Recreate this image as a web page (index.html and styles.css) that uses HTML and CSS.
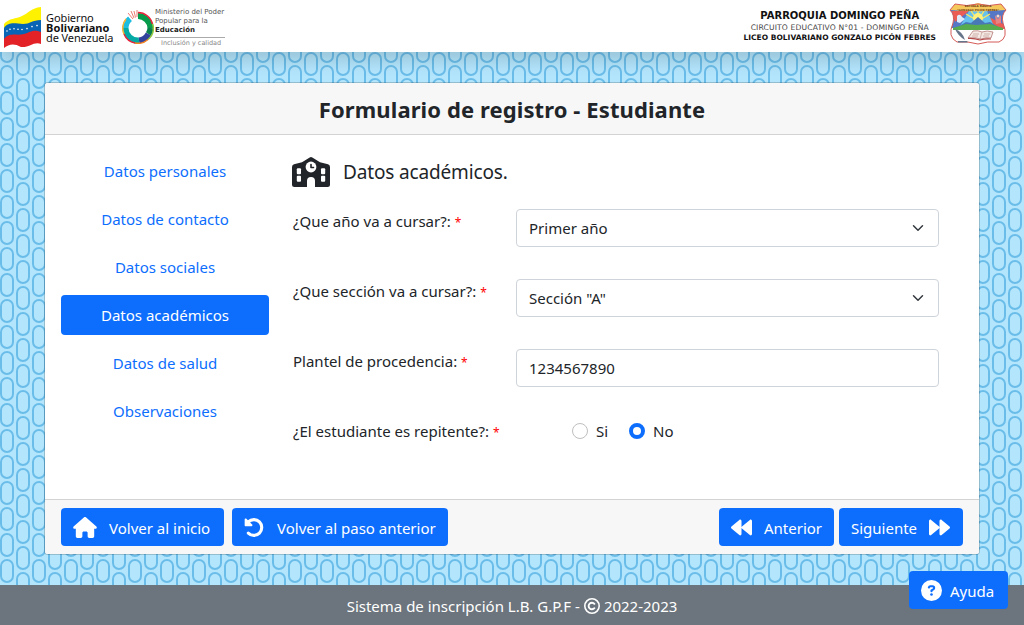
FILE: index.html
```html
<!DOCTYPE html>
<html lang="es">
<head>
<meta charset="utf-8">
<title>Formulario de registro - Estudiante</title>
<link rel="stylesheet" href="styles.css">
</head>
<body>
<header class="topbar">
  <div class="brand">
    <svg class="flag" viewBox="0 0 38 41" width="38" height="41">
      <path fill="#fff200" d="M0 17C5 11 12 12 18 9C25 6 27 1 37 0V15C27 15 22 24 12 22C7 22 4 24 0 27Z"/>
      <path fill="#0864b4" d="M0 21C5 14 12 17 19 17C26 17 28 13 37 13V28C28 25 23 32 14 33C8 29 4 30 0 33Z"/>
      <path fill="#e32227" d="M0 32C6 25 12 29 20 27C27 25 29 22 37 25V37C30 34 25 41 17 40C10 36 5 37 0 41Z"/>
      <g fill="#fff"><circle cx="3" cy="24" r=".8"/><circle cx="6" cy="22.3" r=".8"/><circle cx="10" cy="21.7" r=".8"/><circle cx="14" cy="22.2" r=".8"/><circle cx="18" cy="22.5" r=".8"/><circle cx="23" cy="21.6" r=".8"/><circle cx="28" cy="19.6" r=".8"/><circle cx="33" cy="18.6" r=".8"/></g>
    </svg>
    <div class="gov"><span>Gobierno</span><b>Bolivariano</b><span>de Venezuela</span></div>
    <svg class="ring" viewBox="0 0 32 34" width="32" height="34">
      <g fill="none" stroke-width="6">
        <path stroke="#079b4b" d="M16 6A12.5 12.5 0 0 1 28.5 18"/>
        <path stroke="#087f4d" d="M28.5 18A12.5 12.5 0 0 1 26.5 24"/>
        <path stroke="#30429b" d="M26.5 24A12.5 12.5 0 0 1 17 30.5"/>
        <path stroke="#06aaa4" d="M17 30.5A12.5 12.5 0 0 1 3.500 18"/>
        <path stroke="#1cbde0" d="M3.500 18A12.5 12.5 0 0 1 8 8.800"/>
      </g>
      <g fill="none" stroke-width="1.5">
        <path stroke="#e9243b" d="M16 2.500A15 15 0 0 1 30.500 14"/>
        <path stroke="#8dc63f" d="M30.700 14A15 15 0 0 1 26 29.500"/>
        <path stroke="#f58220" d="M26 29.500A15 15 0 0 1 13 33"/>
        <path stroke="#e9243b" d="M13 33A15 15 0 0 1 2 24"/>
        <path stroke="#f9b233" d="M2 24A15 15 0 0 1 4 9"/>
      </g>
      <path stroke="#e85b4e" stroke-width=".8" d="M6 3l5 6M9 1l3 7M12 1l1.500 6.500M15 0v7"/>
    </svg>
    <div class="ministry"><span>Ministerio del Poder</span><span>Popular para la</span><b>Educación</b><em>Inclusión y calidad</em></div>
  </div>
  <div class="school">
    <div class="school-text"><b class="parish">PARROQUIA DOMINGO PEÑA</b><span class="circuit">CIRCUITO EDUCATIVO N°01 - DOMINGO PEÑA</span><b class="liceo">LICEO BOLIVARIANO GONZALO PICÓN FEBRES</b></div>
    <svg class="crest" viewBox="0 0 58 42" width="58" height="42">
      <defs><clipPath id="shield"><path d="M6 1Q18 4 29 0Q40 4 52 1L57 7Q52 12 54 20Q60 35 50 39Q38 38 29 42Q19 38 8 39Q-2 34 4 20Q6 12 1 7Z"/></clipPath></defs>
      <g clip-path="url(#shield)">
        <path fill="#fff" d="M0 0h58v42H0z"/>
        <path fill="#5577c5" d="M0 7h23L15 25H0z"/><path fill="#eb5c55" d="M3 8h17L6 19z"/>
        <path fill="#5577c5" d="M35 7h23v18H42z"/><path fill="#eb5c55" d="M38 13l18 9v4H40z"/>
        <path fill="#66c1ee" d="M20 8h18l8 17H10z"/>
        <path stroke="#ffe85a" stroke-width="1.300" d="M29 18L17 11M29 18L22 8M29 18V8M29 18l6-10M29 18L41 11"/>
        <circle cx="29" cy="15" r="5" fill="#fff17b"/>
        <path fill="#4878b8" d="M7 25l10-6 5 1 7-6 7 6 5-1 10 6z"/><path fill="#57ac4f" d="M4 25l13-4 10 1 14-1 13 4v2H4z"/>
        <path fill="#f4c85a" d="M2 0h54v7Q42 8 29 8.500 14 8 2 7z"/>
        <path fill="#dceafb" d="M8 13q3-3 5 1l3 2-5 4-3-1z"/><path fill="#e98484" d="M46 12l3 4 3-4v8l-5 1z"/><circle cx="49" cy="13" r="1.500" fill="#f7d7c5"/>
      </g>
      <path fill="none" stroke="#d65b56" d="M6 1Q18 4 29 1Q40 4 52 1L57 7Q52 12 54 20Q60 35 50 39Q38 38 29 41Q19 38 8 39Q-2 34 4 20Q6 12 1 7Z"/>
      <path fill="#f4e9e4" stroke="#9f5756" stroke-width=".6" d="M19 35l5-7q5-1 9 1 5-2 11 0l-2 6q-5-1-10 1-5-2-13-1z"/><path fill="none" stroke="#b24848" stroke-width="1.200" d="M19 35.500q6-.5 12 1.500 5-1.500 11-1"/><path stroke="#b98c86" stroke-width=".6" d="M33 29l-2 7M24 31h6M23 33h6M35 31h6M34 33h6"/>
      <path fill="#67758a" d="M6 26q8 3 10 11-7-4-10-11zm3 12h9l1 1.500H9z"/>
      <text x="29" y="4.300" text-anchor="middle" class="crest-text">ESCUELA BÁSICA</text><text x="29" y="7.600" text-anchor="middle" class="crest-text">"GONZALO PICÓN FEBRES"</text>
    </svg>
  </div>
</header>
<main class="main">
  <form class="card">
    <div class="card-header"><h1>Formulario de registro - Estudiante</h1></div>
    <div class="card-body">
      <nav class="steps"><a>Datos personales</a><a>Datos de contacto</a><a>Datos sociales</a><a class="active">Datos académicos</a><a>Datos de salud</a><a>Observaciones</a></nav>
      <section class="fields">
        <div class="section-title">
          <svg viewBox="0 0 38 30" width="38" height="30"><path fill="#212529" d="M17.700.4Q19 -.3 20.300.4L28 5.300 36 7.300Q38 7.900 38 10V27.500Q38 30 35.500 30H2.500Q0 30 0 27.500V10Q0 7.900 2 7.300L10 5.300Z"/><g fill="#fff"><circle cx="19" cy="10" r="5.400"/><rect x="4.800" y="11.200" width="4.200" height="6" rx="1"/><rect x="4.800" y="18.800" width="4.200" height="6" rx="1"/><rect x="29" y="11.200" width="4.200" height="6" rx="1"/><rect x="29" y="18.800" width="4.200" height="6" rx="1"/><path d="M15 30v-6a4 4 0 0 1 8 0v6z"/></g><path fill="none" stroke="#212529" stroke-width="1.600" stroke-linecap="round" stroke-linejoin="round" d="M19 7.500v3h2.500"/></svg>
          <h2>Datos académicos.</h2>
        </div>
        <div class="row"><label>¿Que año va a cursar?: <i>*</i></label><select><option>Primer año</option></select></div>
        <div class="row"><label>¿Que sección va a cursar?: <i>*</i></label><select><option>Sección "A"</option></select></div>
        <div class="row"><label>Plantel de procedencia: <i>*</i></label><input type="text" class="text-input" value="1234567890"></div>
        <div class="row"><label>¿El estudiante es repitente?: <i>*</i></label><div class="radios"><label><input type="radio" name="rep">Si</label><label><input type="radio" name="rep" checked>No</label></div></div>
      </section>
    </div>
    <div class="card-footer">
      <a class="btn home"><svg viewBox="0 0 576 512" width="24" height="21"><path fill="currentColor" d="M575.800 255.500c0 18-15 32.100-32 32.100h-32l.7 160.200c0 2.700-.2 5.400-.5 8.100V472c0 22.100-17.900 40-40 40H392c-22.100 0-40-17.900-40-40v-88c0-17.700-14.300-32-32-32h-64c-17.700 0-32 14.300-32 32v88c0 22.100-17.900 40-40 40h-80c-22.100 0-40-17.900-40-40V287.600H32c-18 0-32-14-32-32.100c0-9 3-17 10-24L266.400 8c7-7 15-8 22-8s15 2 21 7L564.800 231.500c8 7 12 15 11 24z"/></svg><span>Volver al inicio</span></a>
      <a class="btn back"><svg viewBox="0 0 512 512" width="21" height="21"><path fill="none" stroke="currentColor" stroke-width="76" stroke-linecap="round" d="M105 392a192 192 0 1 0 0-272"/><path fill="currentColor" d="M40 224c-13 0-24-11-24-24V62c0-24 27-34 42-18l142 138c15 16 5 42-17 42z"/></svg><span>Volver al paso anterior</span></a>
      <a class="btn prev"><svg viewBox="0 0 512 512" width="21" height="21"><path fill="currentColor" d="M459.500 440.600c9.500 7.900 22.800 9.700 34.100 4.400S512 428.500 512 416V96c0-12.400-7.200-23.700-18.400-29s-24.500-3.600-34.100 4.400L267.500 231.400c-15 12-15 37 0 49.200zM256 352V96c0-12.400-7.200-23.700-18.400-29s-24.500-3.600-34.100 4.400l-192 160C4.200 237.500 0 246.500 0 256s4.200 18.500 11.500 24.600l192 160c9.500 7.900 22.800 9.700 34.100 4.400S256 428.500 256 416z"/></svg><span>Anterior</span></a>
      <a class="btn next"><span>Siguiente</span><svg viewBox="0 0 512 512" width="21" height="21"><path fill="currentColor" transform="matrix(-1 0 0 1 512 0)" d="M459.500 440.600c9.500 7.900 22.800 9.700 34.100 4.400S512 428.500 512 416V96c0-12.400-7.200-23.700-18.400-29s-24.500-3.600-34.100 4.400L267.500 231.400c-15 12-15 37 0 49.200zM256 352V96c0-12.400-7.200-23.700-18.400-29s-24.500-3.600-34.100 4.400l-192 160C4.200 237.500 0 246.500 0 256s4.200 18.500 11.500 24.600l192 160c9.500 7.900 22.800 9.700 34.100 4.400S256 428.500 256 416z"/></svg></a>
    </div>
  </form>
</main>
<footer class="footer"><span>Sistema de inscripción L.B. G.P.F -</span><svg viewBox="0 0 16 16" width="16" height="16" fill="none" stroke="currentColor"><circle cx="8" cy="8" r="7.200" stroke-width="1.600"/><path stroke-width="1.900" stroke-linecap="round" d="M10.400 5.800a3.300 3.300 0 1 0 0 4.400"/></svg><span>2022-2023</span></footer>
<a class="btn help"><svg viewBox="0 0 512 512" width="21" height="21"><circle cx="256" cy="256" r="256" fill="currentColor"/><path fill="none" stroke="#0d6efd" stroke-width="52" stroke-linecap="round" stroke-linejoin="round" d="M192 181q6-29 35-29h52c23 0 41 18 41 41q0 23-20 35l-44 26v20"/><circle cx="256" cy="352" r="32" fill="#0d6efd"/></svg><span>Ayuda</span></a>
</body>
</html>
```
FILE: styles.css
```css
* { box-sizing: border-box; }
body {
  margin: 0;
  height: 625px;
  overflow: hidden;
  display: flex;
  flex-direction: column;
  font: 15px/24px "Noto Sans", sans-serif;
  color: #212529;
  background: #b3e5fc url("data:image/svg+xml,%3Csvg xmlns='http://www.w3.org/2000/svg' width='32' height='26' fill='none' stroke='%236bbde9' stroke-width='2'%3E%3Crect x='1' y='14' width='12' height='22' rx='6'/%3E%3Crect x='1' y='-12' width='12' height='22' rx='6'/%3E%3Crect x='17' y='1' width='12' height='22' rx='6'/%3E%3C/svg%3E");
}
h1, h2 { margin: 0; }
svg { flex: none; display: block; }
.topbar {
  height: 52px;
  flex: none;
  display: flex;
  justify-content: space-between;
  background: #fff;
  box-shadow: 0 8px 16px rgba(0, 0, 0, .15);
}
.brand { display: flex; padding: 7px 0 0 4px; }
.gov {
  display: flex;
  flex-direction: column;
  width: 76px;
  padding: 6px 0 0 4px;
  font-size: 11px;
  line-height: 10px;
  letter-spacing: -.1px;
  color: #111;
  white-space: nowrap;
}
.gov b { letter-spacing: .1px; }
.ring { margin: 3px 0 0 4px; }
.ministry {
  display: flex;
  flex-direction: column;
  padding: 1px 0 0 1px;
  font: 7px/9px "DejaVu Sans", sans-serif;
  color: #555;
  white-space: nowrap;
}
.ministry b { color: #222; }
.ministry em {
  font-style: normal;
  font-size: 6.500px;
  border-top: 1px solid #aaa;
  margin-top: 2px;
  padding: 1px 0 0 6px;
  width: 70px;
  color: #888;
}
.school { display: flex; padding: 3px 17px 0 0; gap: 13px; }
.school-text {
  display: flex;
  flex-direction: column;
  align-items: center;
  padding-top: 6px;
  font: 7.600px/11px "DejaVu Sans", sans-serif;
  color: #111;
  white-space: nowrap;
}
.parish { font-size: 10px; line-height: 13px; }
.circuit { letter-spacing: .15px; color: #444; }
.liceo { font-size: 7.500px; line-height: 10px; }
.crest-text { font: bold 2.800px "DejaVu Sans", sans-serif; fill: #734219; }
.main { flex: 1; padding: 30px 44px; }
.card {
  width: 936px;
  height: 473px;
  display: flex;
  flex-direction: column;
  background: #fff;
  background-clip: padding-box;
  border: 1px solid rgba(0, 0, 0, .176);
  border-radius: 4px;
  overflow: hidden;
}
.card-header {
  height: 52px;
  flex: none;
  background: #f7f7f7;
  border-bottom: 1px solid #d3d3d3;
  text-align: center;
}
h1 { font-size: 22px; line-height: 52px; font-weight: 700; letter-spacing: .1px; }
.card-body { flex: 1; display: flex; padding: 16px 40px 0 16px; gap: 24px; }
.steps { width: 208px; display: flex; flex-direction: column; gap: 8px; }
.steps a { height: 40px; border-radius: 4px; line-height: 41px; text-align: center; color: #0d6efd; }
.steps .active { background: #0d6efd; color: #fff; }
.fields { flex: 1; padding-top: 5px; }
.section-title { display: flex; align-items: center; gap: 13px; height: 32px; margin: 0 0 21px -1px; }
h2 { font-size: 19px; font-weight: 400; letter-spacing: -.15px; }
.row { display: flex; justify-content: space-between; height: 38px; margin-bottom: 32px; }
.row > label { line-height: 25px; }
.row i { font-style: normal; font-size: 12px; line-height: 1; color: #f00; }
select, .text-input {
  width: 423px;
  height: 38px;
  margin: 0;
  padding: 0 12px;
  border: 1px solid #ced4da;
  border-radius: 4px;
  font: inherit;
  color: inherit;
  background: #fff;
  appearance: none;
}
select { background: #fff url("data:image/svg+xml,%3Csvg xmlns='http://www.w3.org/2000/svg' viewBox='0 0 16 16'%3E%3Cpath fill='none' stroke='%23343a40' stroke-linecap='round' stroke-linejoin='round' stroke-width='2' d='m2 5 6 6 6-6'/%3E%3C/svg%3E") no-repeat right 14px center / 12px; }
.radios { width: 423px; padding-left: 56px; display: flex; gap: 21px; }
.radios label { display: flex; gap: 8px; line-height: 25px; }
.radios input { appearance: none; width: 16px; height: 16px; margin: 4px 0 0; border: 1px solid #bfbfbf; border-radius: 50%; background: #fff; }
.radios input:checked { border: 4px solid #0d6efd; }
.card-footer {
  height: 55px;
  flex: none;
  display: flex;
  padding: 8px 16px;
  background: #f7f7f7;
  border-top: 1px solid #d3d3d3;
}
.btn {
  height: 38px;
  display: flex;
  align-items: center;
  gap: 12px;
  padding: 1px 12px 0;
  border-radius: 4px;
  background: #0d6efd;
  color: #fff;
  white-space: nowrap;
}
.home { width: 163px; margin-right: 8px; }
.back { width: 216px; }
.prev { width: 115px; margin: 0 5px 0 auto; }
.next { width: 124px; }
.footer {
  height: 40px;
  flex: none;
  display: flex;
  align-items: center;
  justify-content: center;
  gap: 4px;
  padding-top: 2px;
  background: #6c757d;
  color: #fff;
}
.help { position: fixed; right: 16px; bottom: 16px; width: 99px; gap: 8px; }
```
